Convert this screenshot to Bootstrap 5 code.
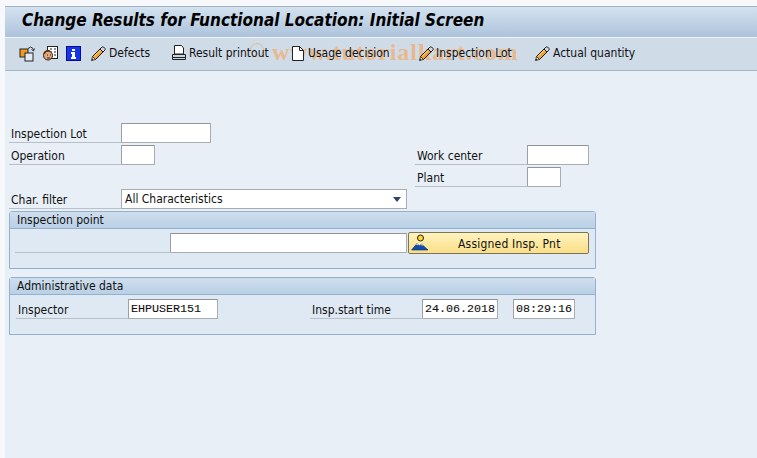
<!DOCTYPE html>
<html lang="en"><head><meta charset="utf-8"><title>Change Results</title>
<link href="https://cdn.jsdelivr.net/npm/bootstrap@5.3.0/dist/css/bootstrap.min.css" rel="stylesheet">
<style>
html,body{margin:0;height:458px;overflow:hidden;background:#f7f8fc}
body{font-family:"DejaVu Sans Condensed","DejaVu Sans",sans-serif;font-size:12px;line-height:14px;color:#111}
.sap-shell{margin:6px 0 0 5px;height:452px;background:#e8eff7;position:relative}
.sap-title{height:31px;border-top:1px solid #9fb2c8;background:linear-gradient(#d4e2ef,#adc3dc);padding-left:17px;font-weight:700;font-style:italic;font-size:17px;line-height:26px;color:#000;white-space:nowrap}
.sap-tools{height:34px;border-top:1px solid #eef3f8;border-bottom:1px solid #a5b6c8;background:#cfdce8;color:#111}
.sap-tools svg{display:block;flex:none}
.t-item{display:flex;align-items:center;white-space:nowrap;position:absolute;top:3px;height:24px}
.sap-form{padding:52px 0 0 4px}
.f-cols{display:flex}
.f-left{width:398px}
.f-right{margin:22px 0 0 8px}
.f-row{display:flex;height:22px}
.f-gap{height:22px}
.f-lab{border-bottom:1px solid #b7bfc7;height:20px;padding:4px 0 0 2px;white-space:nowrap;flex:none}
.f-inp{height:20px;background:#fff;border:1px solid #a8adb3;border-top-color:#8f959b;border-left-color:#9aa0a6;flex:none;border-radius:1px}
.w112{width:112px}
.f-sel{width:286px;height:20px;background:#fff;border:1px solid #a8adb3;padding:2px 0 0 3px;position:relative;flex:none}
.f-sel::after{content:"";position:absolute;right:5px;top:7px;border:4.5px solid transparent;border-top:5px solid #2f4468;border-bottom:0}
.g-box{width:587px;border:1px solid #93b0cf;border-radius:3px 3px 0 0;background:#dfe9f4}
.g-head{height:17px;background:linear-gradient(#cfdeed,#b9d0e6);border-bottom:1px solid #93b0cf;padding:1px 0 0 7px;margin:0}
.g-one{height:58px}
.g-two{margin-top:8px;height:58px}
.g-body{display:flex;position:relative}
.mono{font-family:"Liberation Mono",monospace;font-size:11.7px;line-height:19px;padding-left:2px;color:#111;-webkit-text-stroke:.1px #111}
.sap-btn{width:181px;height:22px;margin:3px 0 0 1px;border:1px solid #7c7458;border-radius:2px;background:linear-gradient(#fff3bf,#fde79c 60%,#f8df8b);display:flex;align-items:center;position:relative;padding:1px 0 0;color:#111;font:inherit;letter-spacing:.2px}
.sap-btn svg{position:absolute;left:2px;top:1px}
.sap-btn span{margin-left:49px}
.w-mark{position:absolute;left:267px;top:1px;font-family:"Liberation Serif",serif;font-weight:700;font-size:24px;letter-spacing:1px;color:#e8b98f;white-space:nowrap;pointer-events:none;line-height:26px}
.w-ring{position:absolute;left:245px;top:5px;width:14px;height:14px;border:1px solid #e3bb98;border-radius:50%}
</style></head>
<body>
<svg width="0" height="0" class="position-absolute"><symbol id="pen" viewBox="0 0 15 15"><path d="M1.500 10.500L10.500 1.500l3 3L4.500 13.500z" fill="#f2a02f" stroke="#1a1a1a"/><path d="M3 10.500L10.500 3" stroke="#ffe08a"/><path d="M10.500 1.500q1-1 2-.5l1.500 1.500q.5 1-.5 2l-1.500 1.500-3-3z" fill="#d8d4e4" stroke="#1a1a1a"/><path d="M1.500 10.500l3 3-4 1z" fill="#f7e3bd" stroke="#1a1a1a" stroke-width=".7"/><path d="M.5 14.500l.5-2 1.500 1.500z" fill="#111"/></symbol></svg>
<div class="sap-shell">
 <div class="sap-title">Change Results for Functional Location: Initial Screen</div>
 <div class="sap-tools position-relative">
  <div class="w-ring"></div>
  <div class="w-mark">www.tutorialkart.com</div>
  <span class="t-item" style="left:14px"><svg width="16" height="17" viewBox="0 0 16 17"><rect x="1" y="4" width="8" height="8" fill="#f39a1e" stroke="#222"/><rect x="6" y="8" width="8" height="8" fill="#dfeaf5" stroke="#222"/><path d="M9 3.500q3-3 5 0l.5 2M12.500 4.500l2 1.500 1-2.500" fill="none" stroke="#333"/></svg></span>
  <span class="t-item" style="left:37px"><svg width="17" height="17" viewBox="0 0 17 17"><rect x="5.500" y="1.500" width="10" height="12" fill="#fff" stroke="#222"/><path d="M8 4h2M12 4h2M8 7h2M12 7h2M12 10h2" stroke="#222"/><circle cx="6" cy="10.500" r="4.500" fill="#e8a878" stroke="#222"/><path d="M2 9q1-4 6-3" stroke="#5a3412" fill="none" stroke-width="1.500"/><path d="M5 10h1M8 10h1M5 13h3" stroke="#222"/></svg></span>
  <span class="t-item" style="left:61px"><svg width="15" height="15" viewBox="0 0 15 15"><rect width="15" height="15" fill="#0a0a90"/><rect x="1" y="1" width="13" height="13" fill="#1436e8"/><path d="M6 3h3v2H6zM5 6h4v5h1v2H5v-2h1V8H5z" fill="#fff"/></svg></span>
  <span class="t-item" style="left:86px"><svg width="15" height="15"><use href="#pen"/></svg><span style="margin-left:3px">Defects</span></span>
  <span class="t-item" style="left:167px"><svg width="14" height="16" viewBox="0 0 14 16"><path d="M2.500 .5h7l2 2.500v6h-9z" fill="#fff" stroke="#222"/><path d="M.5 9.500h13v5H.5z" fill="#c8d4e0" stroke="#222"/><path d="M1 12.500h12" stroke="#222"/></svg><span style="margin-left:3px">Result printout</span></span>
  <span class="t-item" style="left:287px"><svg width="12" height="15" viewBox="0 0 12 15"><path d="M.5 .5h7l4 4v10H.5z" fill="#fff" stroke="#222"/><path d="M7.500 .5v4h4" fill="none" stroke="#222"/></svg><span style="margin-left:4px">Usage decision</span></span>
  <span class="t-item" style="left:414px"><svg width="15" height="15"><use href="#pen"/></svg><span style="margin-left:2px">Inspection Lot</span></span>
  <span class="t-item" style="left:530px"><svg width="15" height="15"><use href="#pen"/></svg><span style="margin-left:3px">Actual quantity</span></span>
 </div>
 <div class="sap-form">
  <div class="f-cols">
   <div class="f-left">
    <div class="f-row"><div class="f-lab w112">Inspection Lot</div><div class="f-inp" style="width:90px"></div></div>
    <div class="f-row"><div class="f-lab w112">Operation</div><div class="f-inp" style="width:34px"></div></div>
    <div class="f-gap"></div>
    <div class="f-row"><div class="f-lab w112">Char. filter</div><div class="f-sel">All Characteristics</div></div>
   </div>
   <div class="f-right">
    <div class="f-row"><div class="f-lab w112">Work center</div><div class="f-inp" style="width:62px"></div></div>
    <div class="f-row"><div class="f-lab w112">Plant</div><div class="f-inp" style="width:34px"></div></div>
   </div>
  </div>
  <div class="g-box g-one">
   <div class="g-head">Inspection point</div>
   <div class="g-body" style="padding-left:5px">
    <div class="f-lab" style="width:155px;margin-top:4px"></div>
    <div class="f-inp" style="width:237px;margin-top:4px"></div>
    <button type="button" class="sap-btn"><svg width="18" height="17" viewBox="0 0 18 17"><circle cx="9.500" cy="4" r="3" fill="#ffd92b" stroke="#222"/><path d="M.5 16L6 9.500l2.500 2.500 2-2L17 16z" fill="#0d4fb0" stroke="#102a55" stroke-width=".6"/><path d="M5 10.800l1-1.300 1.500 1.500zM9.800 11l1-1 1.500 1.800z" fill="#fff"/></svg><span>Assigned Insp. Pnt</span></button>
   </div>
  </div>
  <div class="g-box g-two">
   <div class="g-head">Administrative data</div>
   <div class="g-body" style="padding:4px 0 0 6px">
    <div class="f-lab w112">Inspector</div>
    <div class="f-inp mono" style="width:90px">EHPUSER151</div>
    <div class="f-lab" style="width:112px;margin-left:92px">Insp.start time</div>
    <div class="f-inp mono" style="width:76px">24.06.2018</div>
    <div class="f-inp mono" style="width:62px;margin-left:15px">08:29:16</div>
   </div>
  </div>
 </div>
</div>
<script src="https://cdn.jsdelivr.net/npm/bootstrap@5.3.0/dist/js/bootstrap.bundle.min.js"></script>
</body></html>
